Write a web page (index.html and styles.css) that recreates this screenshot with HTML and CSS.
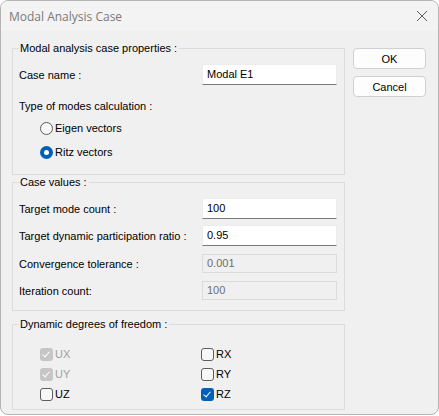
FILE: index.html
```html
<!DOCTYPE html>
<html>
<head>
    <title>Modal Analysis Case</title>
    <link rel="stylesheet" href="styles.css">
</head>
<body>
    <div class="window">
        <div class="titlebar">
            <span class="title">Modal Analysis Case</span>
            <svg class="close" width="12" height="12" viewBox="0 0 12 12">
                <path d="M1 1 L11 11 M11 1 L1 11" stroke="#5c5c5c" stroke-width="1" fill="none"/>
            </svg>
        </div>

        <div class="content">
            <div class="groups">
                <fieldset class="group group-props">
                    <legend>Modal analysis case properties :</legend>
                    <div class="row row-name">
                        <label>Case name :</label>
                        <div class="field">Modal E1</div>
                    </div>
                    <div class="line line-type">Type of modes calculation :</div>
                    <div class="option option-eigen"><span class="radio"></span>Eigen vectors</div>
                    <div class="option option-ritz"><span class="radio checked"></span>Ritz vectors</div>
                </fieldset>

                <fieldset class="group group-values">
                    <legend>Case values :</legend>
                    <div class="row row-a">
                        <label>Target mode count :</label>
                        <div class="field">100</div>
                    </div>
                    <div class="row row-b">
                        <label>Target dynamic participation ratio :</label>
                        <div class="field">0.95</div>
                    </div>
                    <div class="row row-c">
                        <label>Convergence tolerance :</label>
                        <div class="field disabled">0.001</div>
                    </div>
                    <div class="row row-d">
                        <label>Iteration count:</label>
                        <div class="field disabled">100</div>
                    </div>
                </fieldset>

                <fieldset class="group group-dof">
                    <legend>Dynamic degrees of freedom :</legend>
                    <div class="dof-grid">
                        <div class="check-item off"><span class="box checked grey"></span>UX</div>
                        <div class="check-item"><span class="box"></span>RX</div>
                        <div class="check-item off"><span class="box checked grey"></span>UY</div>
                        <div class="check-item"><span class="box"></span>RY</div>
                        <div class="check-item"><span class="box"></span>UZ</div>
                        <div class="check-item"><span class="box checked blue"></span>RZ</div>
                    </div>
                </fieldset>
            </div>

            <div class="buttons">
                <button class="btn">OK</button>
                <button class="btn">Cancel</button>
            </div>
        </div>
    </div>
</body>
</html>
```

FILE: styles.css
```css
body {
    margin: 0;
    background: #ffffff;
    font-family: 'Liberation Sans', Arial, sans-serif;
    font-size: 11px;
    color: #000;
}

.window {
    width: 437px;
    height: 413px;
    border: 1px solid #b4b4b4;
    border-radius: 8px;
    background: #f0f0f0;
    overflow: hidden;
}

.titlebar {
    height: 30px;
    background: #f3f3f3;
    display: flex;
    align-items: center;
    justify-content: space-between;
    padding: 0 10px 0 8px;
}

.title {
    font-family: 'Open Sans', sans-serif;
    font-size: 12px;
    color: #7a7a7a;
}

.close {
    display: block;
}

.content {
    display: flex;
    padding: 10px 0 0 11px;
    gap: 8px;
}

.groups {
    width: 333px;
}

.group {
    margin: 0;
    border: 1px solid #dcdcdc;
    padding: 0 7px 0 6px;
}

.group legend {
    padding: 0 2px 0 1px;
    margin-left: 0;
    line-height: 14px;
    height: 14px;
}

.group-props {
    height: 123px;
    padding-top: 9px;
}

.group-values {
    margin-top: 0;
    height: 125px;
    padding-top: 9px;
}

.group-dof {
    margin-top: 6px;
    height: 75px;
    padding-top: 16px;
}

.row {
    display: flex;
    align-items: center;
    justify-content: space-between;
}

.row label {
    white-space: nowrap;
}

.field {
    box-sizing: border-box;
    width: 135px;
    height: 21px;
    background: #fff;
    border: 1px solid #ececec;
    border-bottom: 1px solid #7a7a7a;
    padding: 0 4px;
    line-height: 19px;
}

.field.disabled {
    background: #f0f0f0;
    border: 1px solid #dcdcdc;
    color: #6d6d6d;
    height: 19px;
    line-height: 17px;
}

.row-b { margin-top: 6px; }
.row-c { margin-top: 8px; }
.row-d { margin-top: 8px; }

.line-type {
    margin-top: 13px;
    height: 16px;
    line-height: 16px;
}

.option {
    display: flex;
    align-items: center;
    height: 16px;
    padding-left: 21px;
}

.option-eigen { margin-top: 6px; }
.option-ritz { margin-top: 8px; }

.radio {
    box-sizing: border-box;
    width: 13px;
    height: 13px;
    border: 1px solid #5d5d5d;
    border-radius: 50%;
    background: #f7f7f7;
    margin-right: 2px;
    position: relative;
}

.radio.checked {
    border: none;
    background: #005fb8;
}

.radio.checked::after {
    content: '';
    position: absolute;
    left: 4px;
    top: 4px;
    width: 5px;
    height: 5px;
    border-radius: 50%;
    background: #fff;
}

.dof-grid {
    display: grid;
    grid-template-columns: 161px 1fr;
    row-gap: 6px;
    padding-left: 21px;
}

.check-item {
    display: flex;
    align-items: center;
    height: 14px;
}

.check-item.off {
    color: #a0a0a0;
}

.box {
    box-sizing: border-box;
    width: 13px;
    height: 13px;
    border: 1px solid #5d5d5d;
    border-radius: 3px;
    background: #f7f7f7;
    margin-right: 2px;
    position: relative;
}

.box.checked {
    border: none;
}

.box.grey {
    background: #c6c6c6;
}

.box.blue {
    background: #005fb8;
}

.box.checked::after {
    content: '';
    position: absolute;
    left: 4px;
    top: 2px;
    width: 3px;
    height: 6px;
    border-right: 1px solid #fff;
    border-bottom: 1px solid #fff;
    transform: rotate(40deg);
}

.buttons {
    display: flex;
    flex-direction: column;
    gap: 7px;
    padding-top: 7px;
}

.btn {
    width: 73px;
    height: 21px;
    border: 1px solid #d0d0d0;
    border-radius: 4px;
    background: #fdfdfd;
    font-family: 'Liberation Sans', Arial, sans-serif;
    font-size: 11px;
    color: #000;
    padding: 0;
}
```
